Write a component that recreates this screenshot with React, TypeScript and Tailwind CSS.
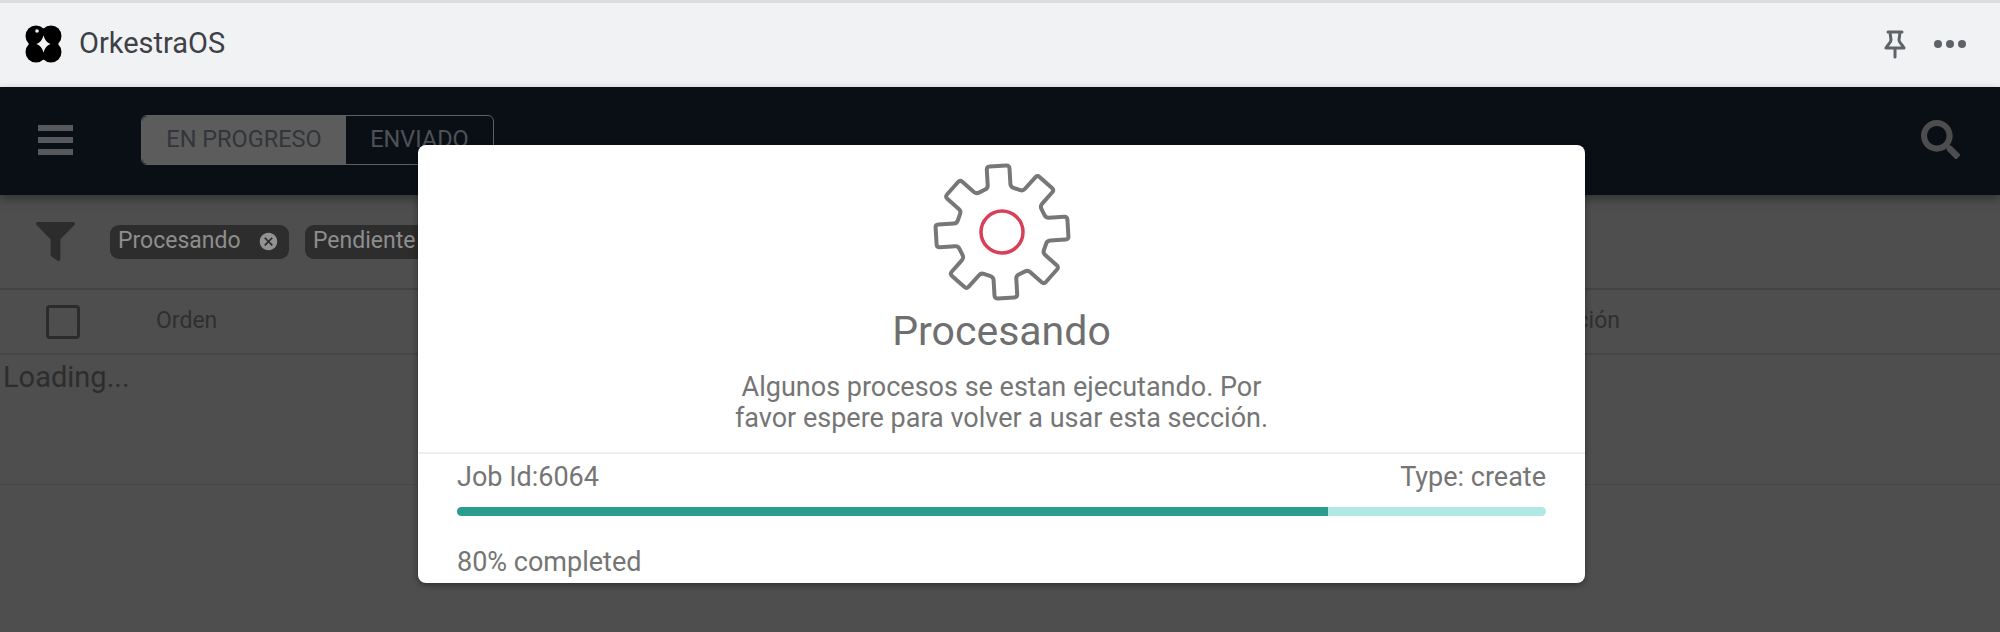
import { FaFilter, FaSearch } from "react-icons/fa"
import { MdCancel } from "react-icons/md"

const font = "font-['Roboto',sans-serif]"

// 8 teeth, slightly turned like the reference, corners rounded with Q curves
const gearPath = () => {
  const cx = 70
  const cy = 70
  const pts: [number, number][] = []
  for (let i = 0; i < 8; i++) {
    const a = ((i * 45 - 3.5 - 90) * Math.PI) / 180
    const add = (r: number, da: number) => {
      pts.push([cx + r * Math.cos(a + da), cy + r * Math.sin(a + da)])
    }
    add(46, -0.25)
    add(67, -0.17)
    add(67, 0.17)
    add(46, 0.25)
  }
  const lerp = (p: [number, number], q: [number, number], t: number) =>
    `${(p[0] + (q[0] - p[0]) * t).toFixed(1)} ${(p[1] + (q[1] - p[1]) * t).toFixed(1)}`
  let d = ""
  pts.forEach((p, i) => {
    const prev = pts[(i + pts.length - 1) % pts.length]
    const next = pts[(i + 1) % pts.length]
    const toPrev = 3 / Math.hypot(p[0] - prev[0], p[1] - prev[1])
    const toNext = 3 / Math.hypot(p[0] - next[0], p[1] - next[1])
    d += `${i === 0 ? "M" : "L"}${lerp(p, prev, toPrev)} Q${p[0].toFixed(1)} ${p[1].toFixed(1)} ${lerp(p, next, toNext)} `
  })
  return d + "Z"
}

const Chip = ({ label, width }: { label: string; width: string }) => (
  <div className={`flex h-[34px] shrink-0 items-center rounded-[9px] bg-[#2d2d2d] pl-2 pr-[10px] text-[23px] text-[#8e8e8e] ${width}`}>
    <span className="flex-1">{label}</span>
    <MdCancel className="text-[21px] text-[#929292]" />
  </div>
)

const Logo = () => (
  <svg width="37" height="38" viewBox="0 0 37 38" className="ml-[25px]">
    <circle cx="11" cy="11" r="10.500" fill="#000" />
    <circle cx="26" cy="11" r="10.500" fill="#000" />
    <circle cx="11" cy="27" r="10.500" fill="#000" />
    <circle cx="26" cy="27" r="10.500" fill="#000" />
    <rect x="8" y="8" width="21" height="22" fill="#000" />
    <path d="M18.500 10.500c1.200 4.500 3.500 7.300 7 8.500-3.500 1.200-5.800 4-7 8.500-1.200-4.500-3.500-7.300-7-8.500 3.500-1.200 5.800-4 7-8.500z" fill="#f1f2f4" />
    <circle cx="12" cy="6" r="1.800" fill="#f1f2f4" />
  </svg>
)

// narrow push pin, the lucide one is too wide here
const PinIcon = () => (
  <svg width="22" height="29" viewBox="0 0 22 29" fill="none" stroke="#5f6368" strokeWidth="3" strokeLinejoin="round" strokeLinecap="round">
    <path d="M4 2h14M6 2l1 8c0 3-3 4-5 8h18c-2-4-5-5-5-8l1-8M11 18v9" />
  </svg>
)

export default function App() {
  return (
    <div className={`relative h-[632px] w-[2000px] overflow-hidden bg-[#4e4e4e] ${font}`}>
      <div className="flex h-[87px] items-center border-t-[3px] border-[#dcdddf] bg-[#f1f2f4] pb-[2px]">
        <Logo />
        <span className="ml-[17px] text-[29px] text-[#3d4045]">OrkestraOS</span>
        <div className="ml-auto mr-[34px] flex items-center gap-[28px]">
          <PinIcon />
          <div className="flex gap-[4px]">
            <div className="size-2 rounded-full bg-[#5f6368]" />
            <div className="size-2 rounded-full bg-[#5f6368]" />
            <div className="size-2 rounded-full bg-[#5f6368]" />
          </div>
        </div>
      </div>

      <div className="flex h-[108px] items-center bg-[#0a0f16] pb-[3px] shadow-[0_4px_10px_rgba(0,0,0,0.35)]">
        <div className="ml-[38px] flex w-[35px] flex-col gap-[6px]">
          <div className="h-[6px] bg-[#56585c]" />
          <div className="h-[6px] bg-[#56585c]" />
          <div className="h-[6px] bg-[#56585c]" />
        </div>
        <div className="ml-[68px] flex h-[50px] w-[353px] rounded-[6px] border border-[#5c5f63] text-[23.500px]">
          <div className="flex w-[204px] items-center justify-center rounded-l-[6px] bg-[#5c5c5c] text-[#32353a]">EN PROGRESO</div>
          <div className="flex flex-1 items-center justify-center text-[#4e5258]">ENVIADO</div>
        </div>
        <FaSearch className="ml-auto mr-[40px] text-[39px] text-[#4d4d4d]" />
      </div>

      <div className="flex h-[95px] items-center gap-4 border-b-2 border-[#434343]">
        <FaFilter className="ml-[36px] mr-[19px] text-[39px] text-[#2c2c2c]" />
        <Chip label="Procesando" width="w-[179px]" />
        <Chip label="Pendiente" width="w-[170px]" />
      </div>

      <div className="flex h-[65px] items-center border-b-2 border-[#464646] text-[23px] text-[#2f2f2f]">
        <div className="ml-[46px] size-[34px] rounded-[4px] border-[3px] border-[#2b2b2b]" />
        <span className="ml-[76px]">Orden</span>
        <span className="ml-auto mr-[380px]">Acción</span>
      </div>

      <div className="h-[130px] border-b border-[#474747] pl-[3px] text-[29px] leading-[44px] text-[#2d2d2d]">Loading...</div>

      <div className="absolute left-[418px] top-[145px] flex h-[438px] w-[1167px] flex-col items-center overflow-hidden rounded-[8px] bg-white text-[#757575] shadow-[0_2px_6px_rgba(0,0,0,0.4)]">
        <svg width="140" height="140" viewBox="0 0 140 140" className="mt-[17px]">
          <path d={gearPath()} fill="none" stroke="#777777" strokeWidth="4" />
          <circle cx="70" cy="70" r="21" fill="none" stroke="#d8405a" strokeWidth="3.500" />
        </svg>
        <h1 className="mt-[6px] text-[41px] leading-[46px] text-[#6f6f6f]">Procesando</h1>
        <p className="mt-[18px] text-center text-[27px] leading-[31px]">
          Algunos procesos se estan ejecutando. Por
          <br />
          favor espere para volver a usar esta sección.
        </p>
        <div className="mt-[18px] w-full border-t-2 border-[#efefef] px-[39px] pt-[7px]">
          <div className="flex justify-between text-[27px] leading-[32px]">
            <span>Job Id:6064</span>
            <span>Type: create</span>
          </div>
          <div className="mt-[14px] h-[9px] overflow-hidden rounded-full bg-[#b0e9e4]">
            <div className="h-full w-[80%] bg-[#2a9d8f]" />
          </div>
          <div className="mt-[30px] text-[27px] leading-[32px]">80% completed</div>
        </div>
      </div>
    </div>
  )
}
